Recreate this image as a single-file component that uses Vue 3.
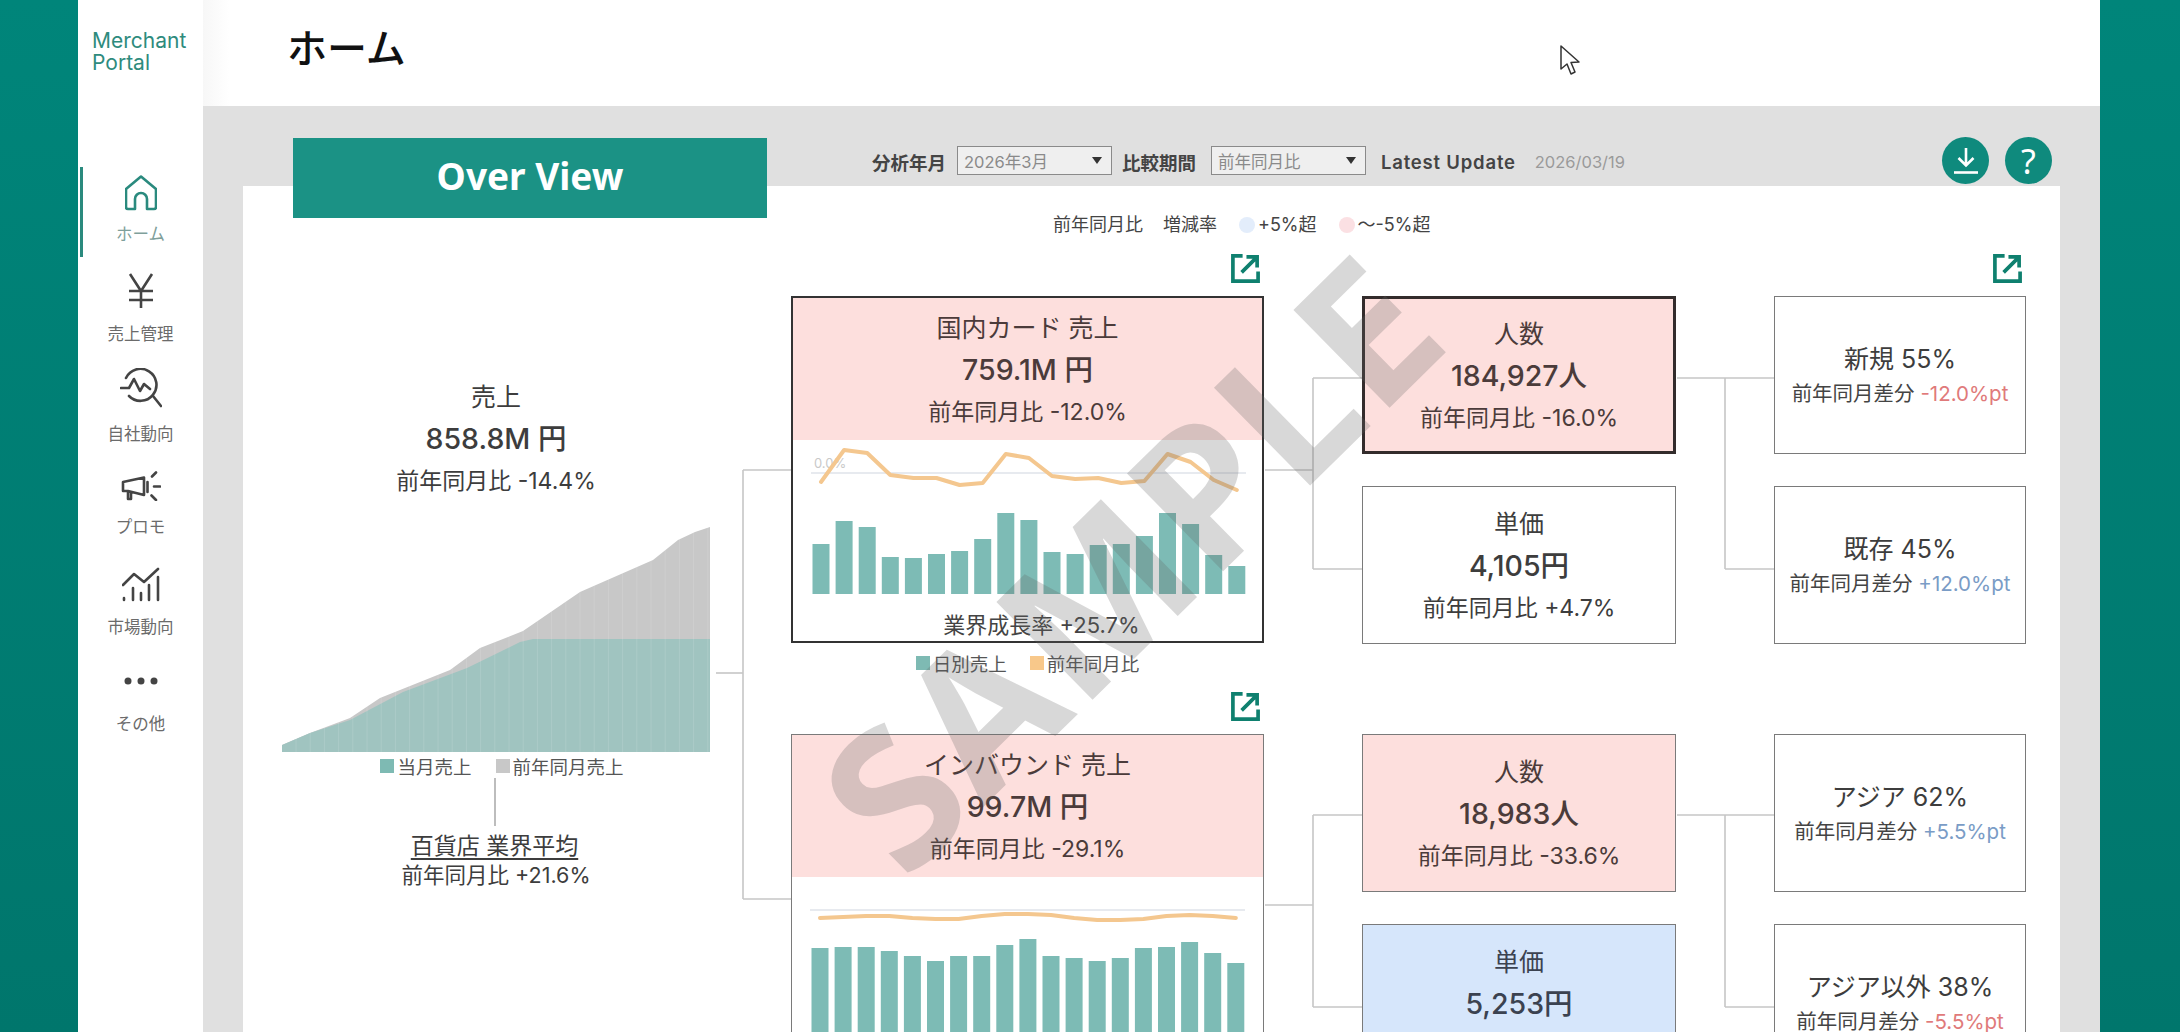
<script setup>
const navItems = [
  { key: 'home', label: 'ホーム', active: true },
  { key: 'yen', label: '売上管理' },
  { key: 'search', label: '自社動向' },
  { key: 'promo', label: 'プロモ' },
  { key: 'market', label: '市場動向' },
  { key: 'more', label: 'その他' }
]

const groups = [
  {
    title: '国内カード 売上',
    value: '759.1M 円',
    rate: '前年同月比 -12.0%',
    strong: true,
    zero: true,
    caption: '業界成長率 +25.7%',
    legend: true,
    bars: [50, 73, 67, 37, 36, 40, 43, 55, 81, 74, 42, 40, 49, 50, 58, 81, 70, 39, 28],
    line: [42, 10, 13, 35, 38, 38, 45, 43, 14, 18, 36, 39, 38, 43, 41, 14, 22, 40, 50],
    kpis: [
      { title: '人数', value: '184,927人', rate: '前年同月比 -16.0%', tone: 'pink', thick: true },
      { title: '単価', value: '4,105円', rate: '前年同月比 +4.7%', tone: '' }
    ],
    subs: [
      { title: '新規 55%', label: '前年同月差分', diff: '-12.0%pt', tone: 'neg' },
      { title: '既存 45%', label: '前年同月差分', diff: '+12.0%pt', tone: 'pos' }
    ]
  },
  {
    title: 'インバウンド 売上',
    value: '99.7M 円',
    rate: '前年同月比 -29.1%',
    bars: [83, 84, 84, 80, 75, 70, 75, 75, 86, 92, 75, 73, 70, 73, 83, 84, 89, 78, 68],
    line: [41, 40, 39, 39, 41, 42, 42, 39, 37, 37, 38, 41, 43, 43, 42, 39, 38, 39, 41],
    kpis: [
      { title: '人数', value: '18,983人', rate: '前年同月比 -33.6%', tone: 'pink' },
      { title: '単価', value: '5,253円', rate: '', tone: 'blue' }
    ],
    subs: [
      { title: 'アジア 62%', label: '前年同月差分', diff: '+5.5%pt', tone: 'pos' },
      { title: 'アジア以外 38%', label: '前年同月差分', diff: '-5.5%pt', tone: 'neg' }
    ]
  }
]

const barX = (i) => 19.5 + i * 23.1
const linePoints = (line) => line.map((y, i) => `${28 + i * 23.1},${y}`).join(' ')
const stripes = Array.from({ length: 30 }, (_, i) => 296 + i * 14.2)

// page coordinates, the overlay uses the same viewBox offset as the panel
const connectors = [
  'M716 673H743', 'M743 470V899', 'M743 470H792', 'M743 899H792',
  'M1265 470H1313', 'M1313 378V569', 'M1313 378H1363', 'M1313 569H1363',
  'M1677 378H1775', 'M1725 378V569', 'M1725 569H1775',
  'M1265 905H1313', 'M1313 815V1007', 'M1313 815H1363', 'M1313 1007H1363',
  'M1677 815H1775', 'M1725 815V1007', 'M1725 1007H1775'
]
</script>

<template>
  <div class="page">
    <div class="edge"></div>

    <aside class="sidebar">
      <div class="logo">Merchant<br />Portal</div>
      <nav class="nav">
        <a v-for="item in navItems" :key="item.key" :class="['nav-item', item.key, { active: item.active }]">
          <svg v-if="item.key === 'home'" width="32" height="36" viewBox="0 0 32 36" fill="none" stroke="#2a8a7e" stroke-width="2.6" stroke-linejoin="round">
            <path d="M16 1.5L31 14V32a2 2 0 0 1-2 2H22V24a6 6 0 0 0-12 0V34H3a2 2 0 0 1-2-2V14Z" />
          </svg>
          <svg v-else-if="item.key === 'yen'" width="26" height="36" viewBox="0 0 26 36" fill="none" stroke="#444" stroke-width="2.6">
            <path d="M2 1L13 18L24 1M13 18V35M1 18H25M1 27H25" />
          </svg>
          <svg v-else-if="item.key === 'search'" width="42" height="40" viewBox="0 0 42 40" fill="none" stroke="#444" stroke-width="2.6" stroke-linecap="round" stroke-linejoin="round">
            <path d="M6 10A16 16 0 1 1 9 28" />
            <path d="M1 20H9L14 11L20 23L24 16L30 21" />
            <path d="M33 28L41 38" />
          </svg>
          <svg v-else-if="item.key === 'promo'" width="40" height="30" viewBox="0 0 40 30" fill="none" stroke="#444" stroke-width="2.6" stroke-linecap="round" stroke-linejoin="round">
            <path d="M2 11L23 6.5V24L7 20H2ZM7 20V28H10V21" />
            <path d="M26.5 11V21M31 5.5L35 1.5M33 15.5H39M30.5 24.5L35 29" />
          </svg>
          <svg v-else-if="item.key === 'market'" width="38" height="35" viewBox="0 0 38 35" fill="none" stroke="#444" stroke-width="2.6" stroke-linecap="round" stroke-linejoin="round">
            <path d="M1 18L12 7L22 15L36 2" />
            <path d="M2 31V33M11 21V33M19 26V33M27 18V33M36 10V33" />
          </svg>
          <svg v-else width="38" height="8" viewBox="0 0 38 8" fill="#444">
            <circle cx="6" cy="4" r="3.5" /><circle cx="19" cy="4" r="3.5" /><circle cx="32" cy="4" r="3.5" />
          </svg>
          <span>{{ item.label }}</span>
        </a>
      </nav>
    </aside>

    <main class="main">
      <header class="topbar"><h1>ホーム</h1></header>

      <div class="content">
        <div class="toolbar">
          <div class="banner">Over View</div>
          <div class="filters">
            <label>分析年月</label>
            <div class="select first"><span>2026年3月</span><i></i></div>
            <label>比較期間</label>
            <div class="select"><span>前年同月比</span><i></i></div>
            <label class="latest">Latest Update</label>
            <span class="date">2026/03/19</span>
          </div>
          <div class="actions">
            <button class="round">
              <svg width="30" height="30" viewBox="0 0 30 30" fill="none" stroke="#fff" stroke-width="2.6">
                <path d="M15 2V19M7.5 12L15 19.5L22.5 12" /><path d="M3 26.5H27" />
              </svg>
            </button>
            <button class="round help">?</button>
          </div>
        </div>

        <section class="panel">
          <svg class="connectors" viewBox="243 186 1817 846" width="1817" height="846" fill="none" stroke="#c6c6c6" stroke-width="1.6">
            <path v-for="d in connectors" :key="d" :d="d" />
          </svg>

          <div class="panel-legend">
            <span>前年同月比</span>
            <span class="gap">増減率</span>
            <i class="dot blue"></i><span>+5%超</span>
            <i class="dot pink"></i><span>～-5%超</span>
          </div>

          <div class="tree">
            <div class="summary">
              <div class="sum-text">
                <div class="t-title">売上</div>
                <div class="t-value">858.8M 円</div>
                <div class="t-rate">前年同月比 -14.4%</div>
              </div>
              <svg class="area" width="428" height="225" viewBox="282 527 428 225">
                <polygon fill="#c8c8c8" points="282,745 310,733 350,718 380,698 450,670 480,648 523,631 580,592 653,560 678,540 695,532 710,527 710,752 282,752" />
                <polygon fill="#a0c4c0" points="282,745 310,733 350,720 403,692 467,668 520,642 533,639 710,639 710,752 282,752" />
                <line v-for="x in stripes" :key="x" :x1="x" :x2="x" y1="527" y2="752" stroke="#fff" stroke-width="1" opacity="0.12" />
              </svg>
              <div class="chart-legend area-legend">
                <span><i class="sw teal"></i>当月売上</span>
                <span><i class="sw gray"></i>前年同月売上</span>
              </div>
              <div class="stem"></div>
              <div class="avg-title">百貨店 業界平均</div>
              <div class="avg-rate">前年同月比 +21.6%</div>
            </div>

            <div class="groups">
              <div v-for="g in groups" :key="g.title" class="group">
                <div class="sales-col">
                  <div class="ext-row">
                    <svg class="ext" width="31" height="31" viewBox="0 0 32 32" fill="none" stroke="#0f806f" stroke-width="3.8">
                      <path d="M13 3H3V29H29V19" /><path d="M12 20L27 5M17 4H28V15" />
                    </svg>
                  </div>
                  <div :class="['sales-card', { strong: g.strong }]">
                    <div class="sales-head">
                      <div class="t-title">{{ g.title }}</div>
                      <div class="t-value">{{ g.value }}</div>
                      <div class="t-rate">{{ g.rate }}</div>
                    </div>
                    <svg class="daily" width="469" height="170" viewBox="0 0 469 170">
                      <line x1="18" x2="453" y1="33" y2="33" stroke="#dfe3ea" stroke-width="1.5" />
                      <text v-if="g.zero" x="21" y="28" class="zero">0.0%</text>
                      <rect v-for="(h, i) in g.bars" :key="i" :x="barX(i)" :y="154 - h" width="17" :height="g.legend ? h : h + 12" fill="#7dbbb5" />
                      <polyline :points="linePoints(g.line)" fill="none" stroke="#f4c78f" stroke-width="4" stroke-linejoin="round" stroke-linecap="round" />
                    </svg>
                    <div v-if="g.caption" class="caption">{{ g.caption }}</div>
                  </div>
                  <div v-if="g.legend" class="chart-legend">
                    <span><i class="sw teal"></i>日別売上</span>
                    <span><i class="sw orange"></i>前年同月比</span>
                  </div>
                </div>

                <div class="kpi-col">
                  <div v-for="k in g.kpis" :key="k.title" :class="['box', k.tone, { thick: k.thick }]">
                    <div class="t-title">{{ k.title }}</div>
                    <div class="t-value">{{ k.value }}</div>
                    <div class="t-rate">{{ k.rate }}</div>
                  </div>
                </div>

                <div class="sub-col">
                  <div class="ext-row">
                    <svg v-if="g.strong" class="ext" width="31" height="31" viewBox="0 0 32 32" fill="none" stroke="#0f806f" stroke-width="3.8">
                      <path d="M13 3H3V29H29V19" /><path d="M12 20L27 5M17 4H28V15" />
                    </svg>
                  </div>
                  <div v-for="s in g.subs" :key="s.title" class="box small">
                    <div class="t-title">{{ s.title }}</div>
                    <div class="t-sub">{{ s.label }} <span :class="s.tone">{{ s.diff }}</span></div>
                  </div>
                </div>
              </div>
            </div>
          </div>
        </section>
      </div>
    </main>

    <div class="edge right"></div>

    <div class="watermark">SAMPLE</div>

    <svg class="cursor" width="24" height="32" viewBox="0 0 24 32" fill="#fff" stroke="#333" stroke-width="1.5" stroke-linejoin="round">
      <path d="M2 2V25L8 20L12 30L16 28L12 18.500L20 18Z" />
    </svg>
  </div>
</template>

<style>
html, body { margin: 0; overflow: hidden; background: #fff; }
</style>

<style scoped>
.page { position: relative; display: flex; width: 2180px; height: 1032px; overflow: hidden; font-family: Inter, "Noto Sans CJK JP", sans-serif; color: #3d3d3d; }
.edge { width: 78px; flex: none; background: linear-gradient(180deg, #00857a, #00766c); }
.edge.right { width: 80px; }

.sidebar { width: 125px; flex: none; background: #fff; }
.logo { padding: 30px 0 0 14px; height: 136px; box-sizing: border-box; font-size: 21px; line-height: 22px; color: #2e8b7d; }
.nav { display: flex; flex-direction: column; }
.nav-item { position: relative; display: flex; flex-direction: column; align-items: center; justify-content: flex-end; color: #6b6b6b; font-size: 16.500px; line-height: 24px; }
.nav-item svg { display: block; flex: none; }
.nav-item.home { height: 120px; padding-bottom: 10px; box-sizing: border-box; color: #7f9f9b; }
.nav-item.home svg { margin-bottom: 11px; }
.nav-item.home.active::before { content: ""; position: absolute; left: 2px; top: 31px; width: 3px; height: 90px; background: #2a8a7e; }
.nav-item.yen { height: 90px; }
.nav-item.yen svg { margin-bottom: 13px; }
.nav-item.search { height: 100px; }
.nav-item.search svg { margin-bottom: 14px; }
.nav-item.promo { height: 93px; }
.nav-item.promo svg { margin-bottom: 14px; }
.nav-item.market { height: 100px; }
.nav-item.market svg { margin-bottom: 13px; }
.nav-item.more { height: 97px; }
.nav-item.more svg { margin-bottom: 27px; }

.main { flex: 1; display: flex; flex-direction: column; min-width: 0; background: #e0e0e0; }
.topbar { height: 106px; flex: none; display: flex; align-items: center; padding-left: 84px; background: linear-gradient(90deg, #f7f7f7, #fff 26px); box-sizing: border-box; }
.topbar h1 { margin: -9px 0 0; font-size: 40px; font-weight: 500; color: #111; line-height: 50px; }

.content { flex: 1; padding: 0 40px; display: flex; flex-direction: column; min-height: 0; }
.toolbar { position: relative; z-index: 2; height: 80px; flex: none; display: flex; align-items: flex-start; padding-left: 50px; }
.banner { width: 474px; height: 80px; margin-top: 32px; flex: none; display: flex; align-items: center; justify-content: center; padding-bottom: 6px; box-sizing: border-box; background: #1b9285; color: #fff; font-size: 37px; font-weight: 700; font-family: "Noto Sans", sans-serif; }
.filters { display: flex; align-items: center; height: 29px; margin: 41px 0 0 105px; font-size: 18.500px; }
.filters label { font-weight: 600; color: #444; white-space: nowrap; }
.select { display: flex; align-items: center; justify-content: space-between; box-sizing: border-box; width: 155px; height: 29px; margin: -2px 9px 0 15px; padding: 0 9px 0 6px; background: #efefef; border: 1.5px solid #8a8a8a; font-size: 16.500px; color: #8a8a8a; }
.select.first { margin: -2px 10px 0 11px; }
.select i { width: 0; height: 0; border-left: 5px solid transparent; border-right: 5px solid transparent; border-top: 7px solid #333; }
.latest { margin-left: 6px; letter-spacing: 0.8px; }
.date { margin-left: 19px; font-size: 16.500px; color: #9a9a9a; }
.actions { margin: 31px 8px 0 auto; display: flex; gap: 16px; }
.round { width: 47px; height: 47px; padding: 0; border: 0; border-radius: 50%; display: flex; align-items: center; justify-content: center; background: #0f8a7d; color: #fff; font-size: 34px; font-family: "Noto Sans", sans-serif; line-height: 1; }

.panel { position: relative; flex: 1; background: #fff; min-height: 0; }
.connectors { position: absolute; left: 0; top: 0; pointer-events: none; }
.panel-legend { position: relative; height: 67px; box-sizing: border-box; padding: 24px 0 0 810px; display: flex; align-items: flex-start; font-size: 18px; line-height: 30px; color: #444; white-space: nowrap; }
.panel-legend .gap { margin-left: 20px; }
.dot { width: 16px; height: 16px; border-radius: 50%; margin: 7px 3px 0 22px; flex: none; }
.dot.blue { background: #e3edfb; }
.dot.pink { background: #fbe0e3; }

.tree { position: relative; display: flex; padding-left: 39px; }
.summary { width: 428px; margin-right: 81px; flex: none; display: flex; flex-direction: column; align-items: center; }
.sum-text { padding-top: 123px; text-align: center; }
.area { display: block; margin-top: 25px; }
.t-title { font-size: 25px; line-height: 42px; }
.t-value { font-size: 28.500px; line-height: 42px; font-weight: 500; }
.t-rate { font-size: 23px; line-height: 42px; min-height: 42px; }
.chart-legend { display: flex; justify-content: center; gap: 24px; height: 30px; align-items: center; font-size: 18.500px; color: #555; white-space: nowrap; }
.chart-legend span { display: flex; align-items: center; }
.area-legend { margin-left: 12px; margin-top: -1px; }
.sw { width: 14px; height: 14px; margin-right: 3px; }
.sw.teal { background: #7ebab3; }
.sw.gray { background: #c8c8c8; }
.sw.orange { background: #f8c88a; }
.stem { width: 1.500px; height: 48px; margin: -3px 0 0 -2px; background: #bdbdbd; }
.avg-title { font-size: 23px; line-height: 42px; margin: -1px 3px 0 0; text-decoration: underline; text-underline-offset: 4px; }
.avg-rate { font-size: 21.500px; line-height: 34px; margin-top: -9px; }

.groups { display: flex; flex-direction: column; }
.group { display: grid; grid-template-columns: 473px 314px 252px; column-gap: 98px; }
.ext-row { height: 43px; display: flex; justify-content: flex-end; align-items: flex-start; }
.ext { margin-right: 3px; }
.sales-col { height: 438px; }
.sales-card { box-sizing: border-box; height: 347px; border: 1.500px solid #7a7a7a; background: #fff; overflow: hidden; text-align: center; }
.sales-card.strong { border: 2px solid #333; }
.sales-head { height: 142px; padding-top: 2px; box-sizing: border-box; display: flex; flex-direction: column; justify-content: center; background: #fddfdd; color: #4b3b3a; }
.daily { display: block; }
.zero { font-size: 13px; fill: #c9c9c9; }
.caption { font-size: 22px; line-height: 31px; padding-left: 28px; color: #444; }
.sales-col > .chart-legend { margin-top: 5px; gap: 23px; }
.sales-col > .chart-legend .sw { margin-right: 3px; }

.kpi-col, .sub-col { display: flex; flex-direction: column; gap: 32px; }
.kpi-col { padding-top: 43px; }
.sub-col { gap: 0; }
.box { box-sizing: border-box; height: 158px; padding-top: 2px; border: 1.500px solid #7a7a7a; background: #fff; display: flex; flex-direction: column; justify-content: center; text-align: center; white-space: nowrap; }
.box.small { margin-bottom: 32px; }
.box.small .t-title { line-height: 36px; }
.t-sub { font-size: 20.500px; line-height: 34px; color: #444; }
.box.pink { background: #fddfdd; color: #4b3b3a; }
.box.blue { background: #d6e6fb; color: #3b4250; }
.box.thick { border: 3px solid #332c2c; }
.neg { color: #e07a7a; }
.pos { color: #7a9cc6; }

.watermark { position: absolute; left: 1129px; top: 560px; transform: translate(-50%, -50%) rotate(-44.500deg); font-family: "Noto Sans", sans-serif; font-weight: 700; font-size: 192px; line-height: 1; letter-spacing: 3px; color: rgba(100, 100, 100, 0.25); pointer-events: none; white-space: nowrap; }
.cursor { position: absolute; left: 1559px; top: 44px; }
</style>
